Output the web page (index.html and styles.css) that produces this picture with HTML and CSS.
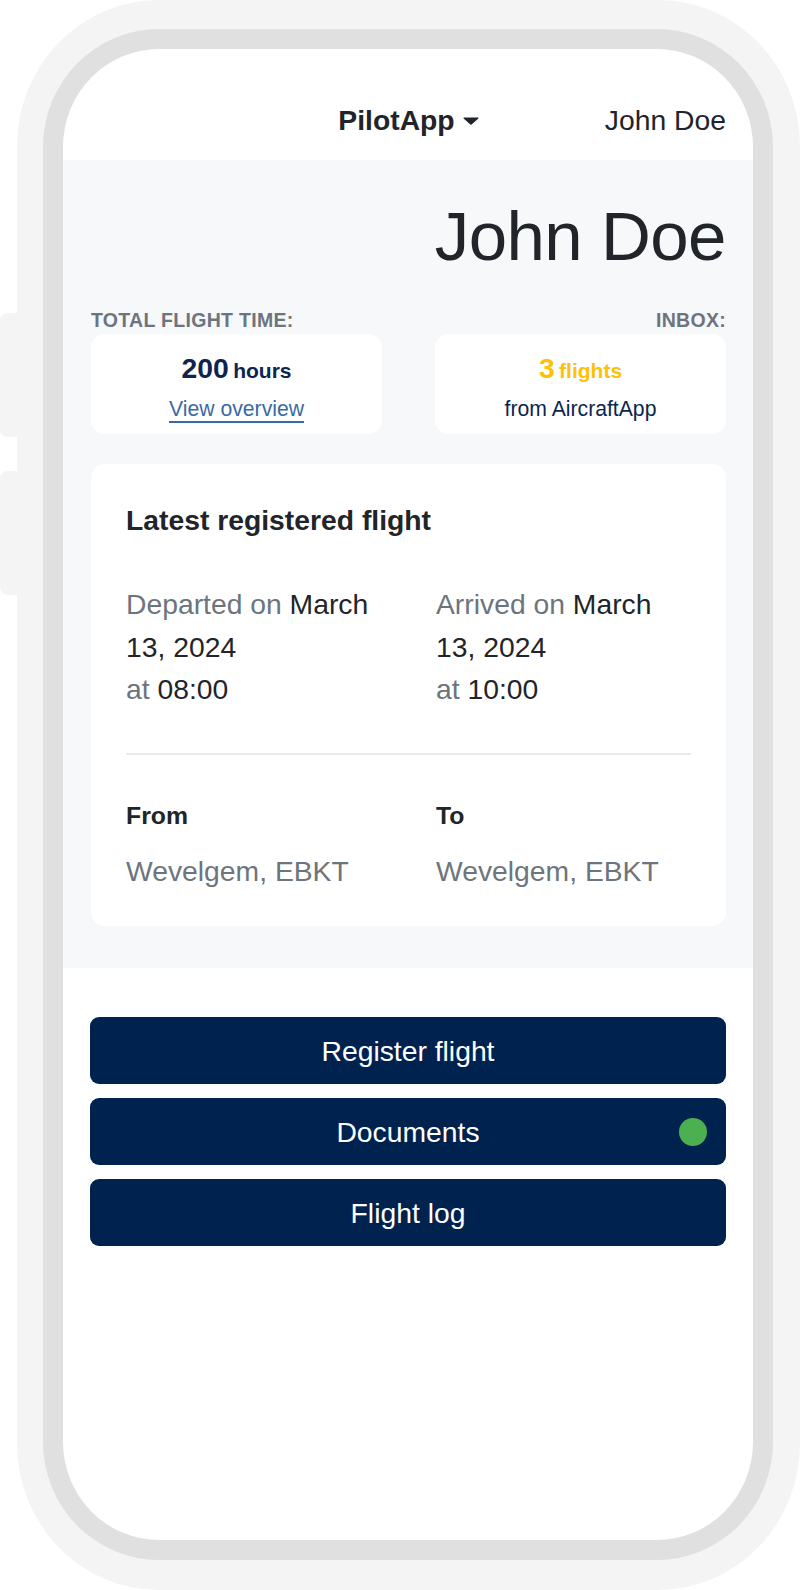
FILE: index.html
```html
<!DOCTYPE html>
<html lang="en">
<head>
<meta charset="utf-8">
<title>PilotApp</title>
<link rel="stylesheet" href="styles.css">
</head>
<body>
<div class="phone">
  <div class="side-btn side-btn-1"></div>
  <div class="side-btn side-btn-2"></div>
  <div class="bezel">
    <div class="screen">
      <header class="topbar">
        <div class="topbar-spacer"></div>
        <div class="brand">PilotApp<svg class="caret" width="16" height="8" viewBox="0 0 16 8"><path d="M1 0.5 H15 a0.6 0.6 0 0 1 0.4 1 L8.6 7.6 a0.9 0.9 0 0 1 -1.2 0 L0.6 1.5 a0.6 0.6 0 0 1 0.4 -1 Z" fill="#212529"/></svg></div>
        <div class="user">John Doe</div>
      </header>

      <main class="overview">
        <h1 class="pilot-name">John Doe</h1>
        <div class="stat-labels">
          <span class="stat-label">Total flight time:</span>
          <span class="stat-label">Inbox:</span>
        </div>
        <div class="stat-cards">
          <div class="stat-card">
            <div class="stat-value"><span class="big">200</span> <span class="unit">hours</span></div>
            <a class="stat-link" href="#">View overview</a>
          </div>
          <div class="stat-card">
            <div class="stat-value warn"><span class="big">3</span> <span class="unit">flights</span></div>
            <div class="stat-sub">from AircraftApp</div>
          </div>
        </div>

        <section class="flight-card">
          <h2 class="flight-title">Latest registered flight</h2>
          <div class="flight-grid">
            <div class="flight-time">
              <div><span class="muted">Departed on</span> March<br>13, 2024</div>
              <div><span class="muted">at</span> 08:00</div>
            </div>
            <div class="flight-time">
              <div><span class="muted">Arrived on</span> March<br>13, 2024</div>
              <div><span class="muted">at</span> 10:00</div>
            </div>
          </div>
          <hr class="divider">
          <div class="flight-grid">
            <div>
              <div class="place-label">From</div>
              <div class="place muted">Wevelgem, EBKT</div>
            </div>
            <div>
              <div class="place-label">To</div>
              <div class="place muted">Wevelgem, EBKT</div>
            </div>
          </div>
        </section>
      </main>

      <nav class="actions">
        <button class="action-btn">Register flight</button>
        <button class="action-btn">Documents<span class="dot"></span></button>
        <button class="action-btn">Flight log</button>
      </nav>
    </div>
  </div>
</div>
</body>
</html>
```

FILE: styles.css
```css
* {
  box-sizing: border-box;
}

html, body {
  margin: 0;
  padding: 0;
  background: #ffffff;
}

body {
  font-family: "Liberation Sans", Arial, sans-serif;
  color: #212529;
  width: 800px;
  height: 1590px;
  overflow: hidden;
}

.phone {
  position: relative;
  margin-left: 17px;
  width: 783px;
  height: 1590px;
  background: #f4f4f4;
  border-radius: 142px / 146px;
  padding: 29px 27px 30px 26px;
}

.side-btn {
  position: absolute;
  left: -17px;
  width: 18px;
  background: #f4f4f4;
  border-radius: 8px 0 0 8px;
}

.side-btn-1 {
  top: 313px;
  height: 124px;
}

.side-btn-2 {
  top: 471px;
  height: 124px;
}

.bezel {
  height: 100%;
  background: #e0e0e0;
  border-radius: 116px / 118px;
  padding: 20px;
}

.screen {
  height: 100%;
  background: #ffffff;
  border-radius: 96px / 98px;
  overflow: hidden;
  display: flex;
  flex-direction: column;
}

/* top bar */
.topbar {
  height: 111px;
  flex: none;
  display: grid;
  grid-template-columns: 1fr auto 1fr;
  align-items: start;
  padding: 54px 27px 0 28px;
  font-size: 28.3px;
  line-height: 34px;
}

.brand {
  font-weight: 700;
  display: flex;
  align-items: center;
}

.caret {
  margin-left: 8px;
  margin-top: 1px;
}

.user {
  text-align: right;
}

/* overview */
.overview {
  flex: none;
  height: 808px;
  background: #f7f8fa;
  padding: 35px 27px 0 28px;
}

.pilot-name {
  margin: 0;
  text-align: right;
  font-size: 69px;
  line-height: 83px;
  font-weight: 400;
  letter-spacing: -0.5px;
}

.stat-labels {
  display: flex;
  justify-content: space-between;
  margin-top: 30px;
}

.stat-label {
  font-size: 19.5px;
  line-height: 24px;
  font-weight: 700;
  text-transform: uppercase;
  color: #6c757d;
  letter-spacing: 0.3px;
}

.stat-cards {
  display: grid;
  grid-template-columns: 1fr 1fr;
  column-gap: 53px;
  margin-top: 2px;
}

.stat-card {
  height: 100px;
  background: #ffffff;
  border-radius: 14px;
  padding-top: 17px;
  text-align: center;
}

.stat-value {
  color: #0b2550;
  font-weight: 700;
  line-height: 34px;
}

.stat-value .big {
  font-size: 28.3px;
}

.stat-value .unit {
  font-size: 21px;
}

.stat-value.warn {
  color: #ffc107;
}

.stat-link {
  display: inline-block;
  margin-top: 4px;
  font-size: 21.2px;
  line-height: 30px;
  color: #3a6aa3;
  text-decoration: underline;
  text-decoration-thickness: 2px;
  text-underline-offset: 5px;
}

.stat-sub {
  margin-top: 4px;
  font-size: 21.2px;
  line-height: 30px;
  color: #0b2550;
}

/* flight card */
.flight-card {
  margin-top: 30px;
  background: #ffffff;
  border-radius: 14px;
  padding: 39px 35px 34px 35px;
}

.flight-title {
  margin: 0;
  font-size: 28.3px;
  line-height: 34px;
  font-weight: 700;
}

.flight-grid {
  display: grid;
  grid-template-columns: 255px 255px;
  column-gap: 55px;
}

.flight-time {
  margin-top: 46px;
  font-size: 28.3px;
  line-height: 42.5px;
}

.muted {
  color: #6c757d;
}

.divider {
  margin: 42px 0 0 0;
  border: 0;
  height: 2px;
  background: #e7e9ec;
}

.place-label {
  margin-top: 46px;
  font-size: 24.8px;
  line-height: 30px;
  font-weight: 700;
}

.place {
  margin-top: 19px;
  font-size: 28.3px;
  line-height: 42.5px;
}

/* actions */
.actions {
  display: flex;
  flex-direction: column;
  gap: 14px;
  padding: 49px 27px 0 27px;
}

.action-btn {
  position: relative;
  height: 67px;
  border: 0;
  border-radius: 9px;
  background: #00224f;
  color: #ffffff;
  font-family: "Liberation Sans", Arial, sans-serif;
  font-size: 28.3px;
  line-height: 42px;
  padding: 0;
  cursor: pointer;
}

.dot {
  position: absolute;
  right: 19px;
  top: 50%;
  width: 28px;
  height: 28px;
  margin-top: -14px;
  border-radius: 50%;
  background: #4caf50;
}
```
